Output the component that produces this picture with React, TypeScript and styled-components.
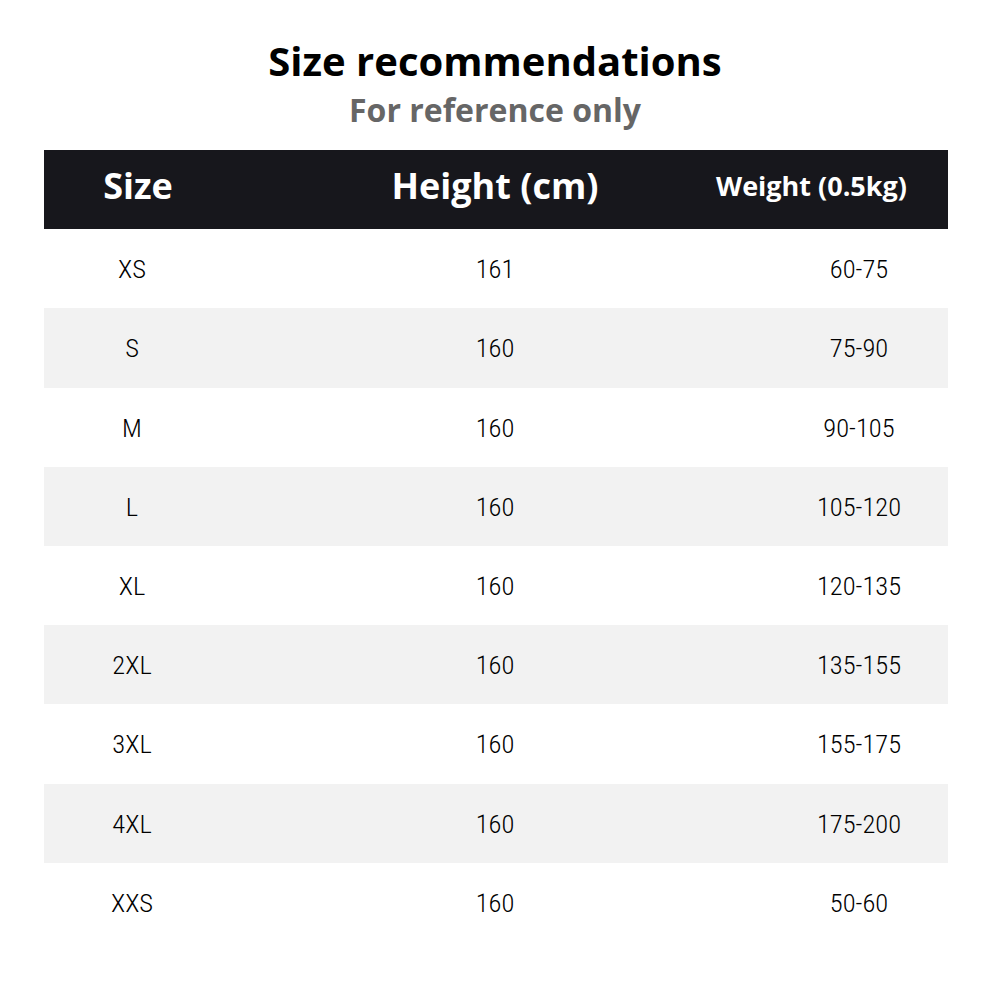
import React from "react";
import styled, { createGlobalStyle } from "styled-components";

const GlobalStyle = createGlobalStyle`
  html, body {
    margin: 0;
    padding: 0;
    background: #ffffff;
  }
`;

interface Row {
  size: string;
  height: string;
  weight: string;
}

const rows: Row[] = [
  { size: "XS", height: "161", weight: "60-75" },
  { size: "S", height: "160", weight: "75-90" },
  { size: "M", height: "160", weight: "90-105" },
  { size: "L", height: "160", weight: "105-120" },
  { size: "XL", height: "160", weight: "120-135" },
  { size: "2XL", height: "160", weight: "135-155" },
  { size: "3XL", height: "160", weight: "155-175" },
  { size: "4XL", height: "160", weight: "175-200" },
  { size: "XXS", height: "160", weight: "50-60" },
];

const App = () => {
  return (
    <Page>
      <GlobalStyle />
      <Title>Size recommendations</Title>
      <Subtitle>For reference only</Subtitle>
      <Table>
        <HeadRow>
          <HeadCell $shift={12}>Size</HeadCell>
          <HeadCell>Height (cm)</HeadCell>
          <HeadCell $small $shift={-95}>Weight (0.5kg)</HeadCell>
        </HeadRow>
        {rows.map((r, i) => (
          <BodyRow key={r.size} $shaded={i % 2 === 1}>
            <Cell>{r.size}</Cell>
            <Cell>{r.height}</Cell>
            <Cell>{r.weight}</Cell>
          </BodyRow>
        ))}
      </Table>
    </Page>
  );
};

const Page = styled.div`
  width: 990px;
  height: 983px;
  padding-top: 36px;
  box-sizing: border-box;
  display: flex;
  flex-direction: column;
  align-items: center;
`;

const Title = styled.h1`
  margin: 0;
  font-family: "Open Sans", "Noto Sans", sans-serif;
  font-weight: 700;
  font-size: 40px;
  line-height: 50px;
  color: #000;
`;

const Subtitle = styled.h2`
  margin: 2px 0 0 0;
  font-family: "Open Sans", "Noto Sans", sans-serif;
  font-weight: 700;
  font-size: 32px;
  line-height: 44px;
  color: #666666;
`;

const Table = styled.div`
  margin-top: 18px;
  margin-left: 2px;
  width: 904px;
  display: flex;
  flex-direction: column;
`;

const grid = `
  display: grid;
  grid-template-columns: 176px 550px 178px;
  align-items: center;
  height: 79.2px;
`;

const HeadRow = styled.div`
  ${grid}
  background: #17171c;
`;

// $shift moves the label off the column centre (padding on one side only)
const HeadCell = styled.div<{ $small?: boolean; $shift?: number }>`
  display: flex;
  justify-content: center;
  min-width: 0;
  color: #ffffff;
  font-family: "Open Sans", "Noto Sans", sans-serif;
  font-weight: 700;
  font-size: ${(p) => (p.$small ? "27px" : "36px")};
  white-space: nowrap;
  margin-top: -9px;
  padding-left: ${(p) => Math.max(p.$shift ?? 0, 0)}px;
  padding-right: ${(p) => Math.max(-(p.$shift ?? 0), 0)}px;
`;

const BodyRow = styled.div<{ $shaded: boolean }>`
  ${grid}
  background: ${(p) => (p.$shaded ? "#f2f2f2" : "#ffffff")};
`;

const Cell = styled.div`
  text-align: center;
  font-family: Roboto, "Noto Sans", sans-serif;
  font-stretch: condensed;
  font-weight: 300;
  font-size: 26.5px;
  color: #000000;
`;

export default App;
